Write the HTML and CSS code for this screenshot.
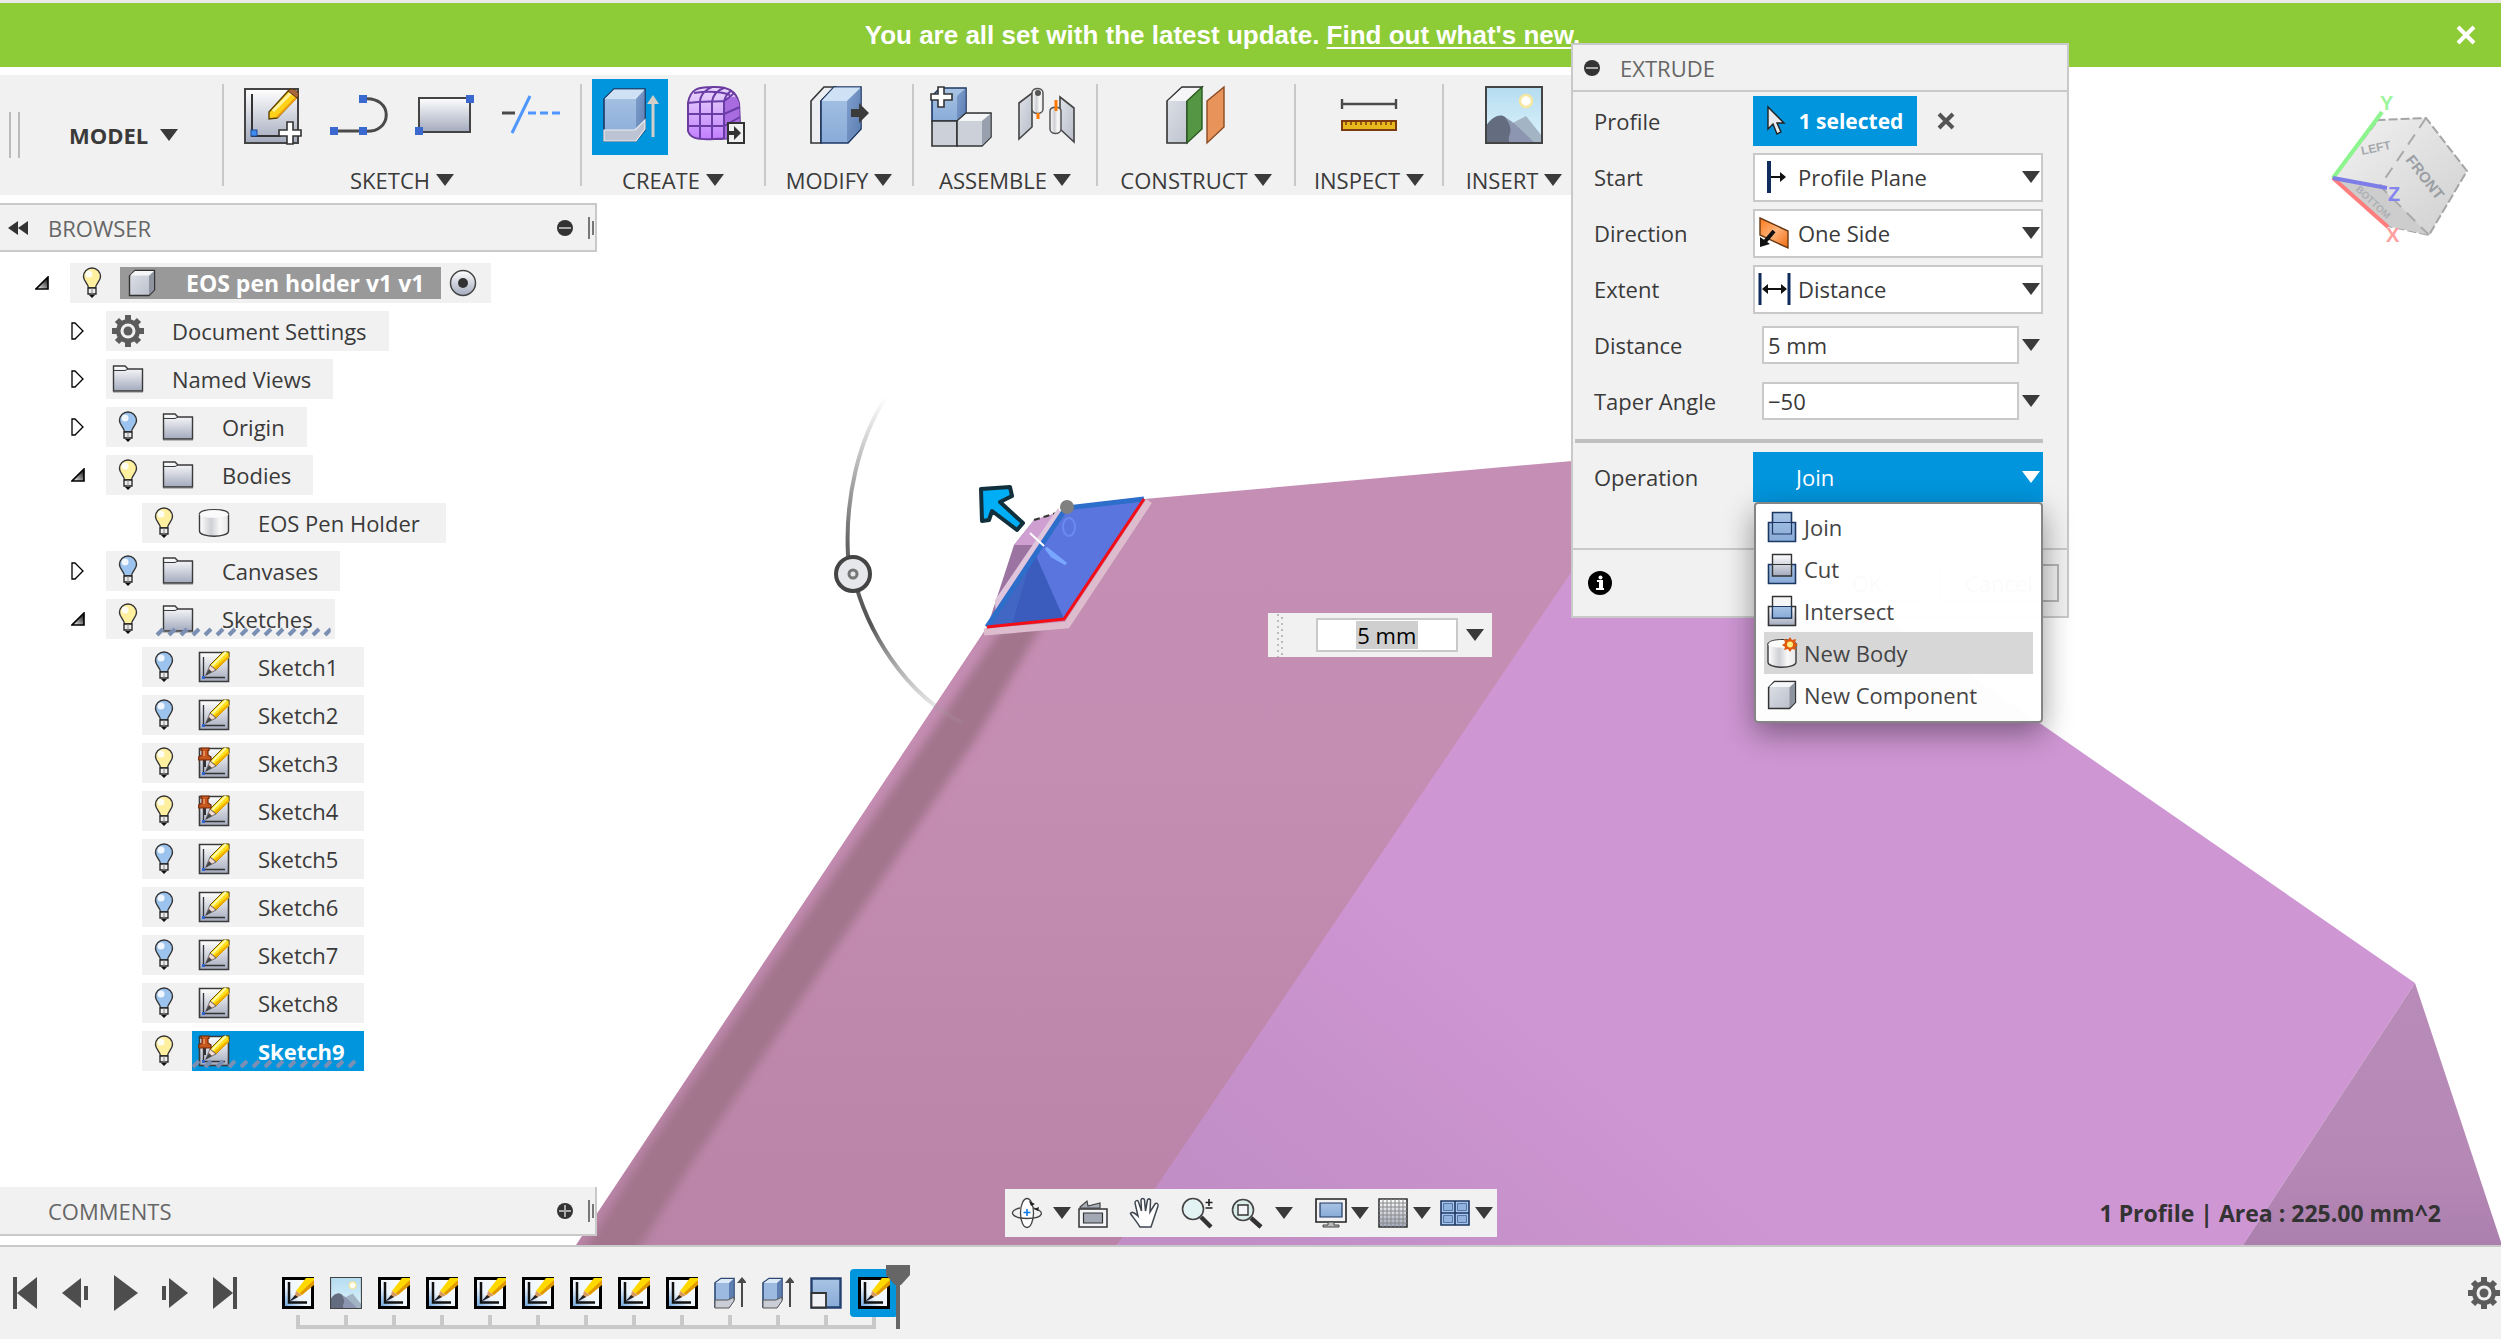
FILE: index.html
```html
<!DOCTYPE html>
<html lang="en">
<head>
<meta charset="utf-8">
<title>EOS pen holder v1</title>
<link rel="stylesheet" href="styles.css">
</head>
<body>
<svg class="defs" width="0" height="0" aria-hidden="true">
  <defs>
    <linearGradient id="steel" x1="0" y1="0" x2="0" y2="1"><stop offset="0" stop-color="#fff"/><stop offset="1" stop-color="#a3aabd"/></linearGradient>
    <linearGradient id="blue" x1="0" y1="0" x2="0" y2="1"><stop offset="0" stop-color="#a9c4e4"/><stop offset="1" stop-color="#88abd8"/></linearGradient>
    <linearGradient id="blueside" x1="0" y1="0" x2="1" y2="1"><stop offset="0" stop-color="#7f9fce"/><stop offset="1" stop-color="#5b7db0"/></linearGradient>
    <linearGradient id="grey" x1="0" y1="0" x2="1" y2="1"><stop offset="0" stop-color="#dfe2e8"/><stop offset="1" stop-color="#b7bcc9"/></linearGradient>
    <linearGradient id="can" x1="0" y1="0" x2="1" y2="0"><stop offset="0" stop-color="#fff"/><stop offset=".4" stop-color="#cfd0d4"/><stop offset=".7" stop-color="#f8f8f8"/><stop offset="1" stop-color="#e6e6e8"/></linearGradient>
    <linearGradient id="violet" x1="0" y1="0" x2="0" y2="1"><stop offset="0" stop-color="#e9d8fb"/><stop offset="1" stop-color="#c27fff"/></linearGradient>
    <linearGradient id="orange" x1="0" y1="0" x2="1" y2="1"><stop offset="0" stop-color="#ff7a1a"/><stop offset=".5" stop-color="#ffb27a"/><stop offset="1" stop-color="#f06a0c"/></linearGradient>
    <linearGradient id="sky" x1="0" y1="0" x2="0" y2="1"><stop offset="0" stop-color="#b5dcf0"/><stop offset="1" stop-color="#ddf3fc"/></linearGradient>
    <linearGradient id="twist" x1="0" y1="1" x2="1" y2="0"><stop offset="0" stop-color="#fff"/><stop offset=".4" stop-color="#999"/><stop offset="1" stop-color="#000"/></linearGradient>
    <linearGradient id="page" x1="0" y1="1" x2="1" y2="0"><stop offset="0" stop-color="#5a9be0"/><stop offset=".4" stop-color="#eef5fc"/><stop offset="1" stop-color="#fff"/></linearGradient>
    <pattern id="hatch" width="12" height="10" patternUnits="userSpaceOnUse"><path d="M3 8L9 2" stroke="#7a8fb3" stroke-width="4"/></pattern>

    <symbol id="tri" viewBox="0 0 18 12"><path d="M0 0H18L9 12Z" fill="currentColor"/></symbol>
    <symbol id="closed" viewBox="0 0 14 18"><path d="M1 1H4L12 9L4 17H1Z" fill="#fff" stroke="#000" stroke-width="1.3"/></symbol>
    <symbol id="open" viewBox="0 0 14 14"><path d="M13 1V13H1Z" fill="url(#twist)" stroke="#000" stroke-width="1.6"/></symbol>
    <symbol id="bulb" viewBox="0 0 20 32"><path d="M6.500 21C6 16 1.500 14.500 1.500 9.500A8.500 8.500 0 0 1 18.500 9.500C18.500 14.500 14 16 13.500 21Z" fill="currentColor" stroke="#333" stroke-width="1.4"/><circle cx="7" cy="7" r="3.500" fill="#fff" opacity=".85"/><path d="M6 21H14V27H6Z" fill="#ececec" stroke="#222" stroke-width="1.3"/><path d="M10 21V27" stroke="#888"/><path d="M7 28H13L10 31Z" fill="#111"/></symbol>
    <symbol id="folder" viewBox="0 0 32 30"><path d="M1.500 2H13L16 5H30.500V27H1.500Z" fill="url(#steel)" stroke="#3a3a3a" stroke-width="1.4"/><path d="M2 6.500H13L16 5" fill="none" stroke="#3a3a3a"/><path d="M1 28.500H31" stroke="#bbb"/></symbol>
    <symbol id="gear" viewBox="0 0 32 32"><path d="M16 0V32M0 16H32" stroke="#5c5c5c" stroke-width="6"/><path d="M5 5L27 27M27 5L5 27" stroke="#5c5c5c" stroke-width="6"/><circle cx="16" cy="16" r="12" fill="#5c5c5c"/><circle cx="16" cy="16" r="7.500" fill="#f1f1f1"/><circle cx="16" cy="16" r="4.500" fill="#5c5c5c"/></symbol>
    <symbol id="cube" viewBox="0 0 28 28"><path d="M1.500 7L7 1.500H26.500V21L21 26.500H1.500Z" fill="url(#grey)" stroke="#333" stroke-width="1.4"/><path d="M21 7L26 2V21L21 26Z" fill="#8d939f"/><path d="M2 6.500L7 2H26L21 6.500Z" fill="#f5f6f8"/></symbol>
    <symbol id="can-icon" viewBox="0 0 32 30"><path d="M1.500 6V23C1.500 30 30.500 30 30.500 23V6Z" fill="url(#can)" stroke="#3a3a3a" stroke-width="1.4"/><path d="M1.500 6C1.500 0 30.500 0 30.500 6C30.500 11 1.500 11 1.500 6Z" fill="#fbfbfb"/><path d="M1.500 6C1.500 0 30.500 0 30.500 6" fill="none" stroke="#3a3a3a" stroke-width="1.2"/></symbol>
    <symbol id="sketch" viewBox="0 0 32 32"><path d="M1.500 1.500H30.500V30.500H1.500Z" fill="url(#steel)" stroke="#3a3a3a" stroke-width="1.600"/><path d="M5.500 6V26.500H27" fill="none" stroke="#333" stroke-width="1.300"/><rect x="4" y="25" width="3" height="3" fill="#2f62cc"/><path d="M25 1H31V6L18 19L12 14Z" fill="#ffe11a" stroke="#665200" stroke-width="1"/><path d="M31 4V7L18 19L16 17Z" fill="#f0b000"/><path d="M28 1L14 15" stroke="#fff9b0" stroke-width="2"/><path d="M12 14L18 19L8 24Z" fill="#f6d9cf" stroke="#555" stroke-width=".8"/><path d="M11 18L14 21L7 25Z" fill="#444"/></symbol>
    <symbol id="pinned" viewBox="0 0 32 32"><use href="#sketch"/><path d="M7 12V20" stroke="#333" stroke-width="2"/><path d="M3 1H11V3.500H10V8L13 10V13H.7V10L4 8V3.500H3Z" fill="#c8571f" stroke="#702a08" stroke-width="1.200"/><path d="M6 4V9" stroke="#f0a070" stroke-width="1.500"/></symbol>
    <symbol id="t-sketch" viewBox="0 0 32 32"><path d="M1.500 1.500H30.500V30.500H1.500Z" fill="url(#page)" stroke="#000" stroke-width="3"/><path d="M7 5V25.500H25" fill="none" stroke="#111" stroke-width="2.500"/><path d="M24 1H32V6L20 18L14 14Z" fill="#ffd800"/><path d="M32 3V8L20 18L18 16Z" fill="#e09a00"/><path d="M14 14L20 18L12 22Z" fill="#d99a62"/><path d="M13 18L16 20L7 25Z" fill="#222"/></symbol>
    <symbol id="t-extrude" viewBox="0 0 32 32"><path d="M1 6L7 1.500H20V22L15 30H1Z" fill="#9cb9e0" stroke="#2c4a75" stroke-width="1.600"/><path d="M1.500 6L7 2H19.500L15 6Z" fill="#dbe8f5"/><path d="M15 6L19.500 2V22L15 28Z" fill="#5f7fb3"/><path d="M1 23H14L20 20V24L15 31H1Z" fill="#c9cdd6" stroke="#555"/><path d="M28 6V30" stroke="#4a4a4a" stroke-width="2"/><path d="M28 0L33 6H23Z" fill="#4a4a4a"/></symbol>
    <symbol id="t-scale" viewBox="0 0 32 32"><path d="M1.500 1.500H30.500V30.500H1.500Z" fill="url(#blue)" stroke="#24406e" stroke-width="2.400"/><path d="M1.500 16H16V30.500H1.500Z" fill="#f0f1f5" stroke="#333" stroke-width="1.800"/></symbol>
    <symbol id="photo" viewBox="0 0 58 58"><path d="M1 1H57V57H1Z" fill="url(#sky)"/><circle cx="41" cy="15" r="6" fill="#fff" stroke="#f5e7a0" stroke-width="2.500"/><path d="M22 40L41 30L57 50V57H22Z" fill="#a3b5c4"/><path d="M1 40C6 32 14 27 20 31L48 57H1Z" fill="#646c80"/><path d="M20 31C34 40 42 50 50 57H25C20 48 32 48 20 31Z" fill="#8d96b0"/><path d="M1 1H57V57H1Z" fill="none" stroke="#444" stroke-width="2"/></symbol>
    <symbol id="minus" viewBox="0 0 16 16"><circle cx="8" cy="8" r="8" fill="#333"/><path d="M2 8H14" stroke="#aaa" stroke-width="2"/></symbol>
    <symbol id="plus" viewBox="0 0 16 16"><circle cx="8" cy="8" r="8" fill="#333"/><path d="M2 8H14M8 2V14" stroke="#aaa" stroke-width="2"/></symbol>
    <symbol id="grip" viewBox="0 0 8 24"><path d="M2 1V23M6 5V19" stroke="#777" stroke-width="2"/></symbol>
  </defs>
</svg>

<header class="banner" role="status">
  <p>You are all set with the latest update. <a href="#new">Find out what's new</a>.</p>
  <button class="banner-close" aria-label="Dismiss"><svg width="20" height="20" viewBox="0 0 20 20"><path d="M2 2L18 18M18 2L2 18" stroke="#fff" stroke-width="4"/></svg></button>
</header>

<main class="workspace">
  <svg class="scene" viewBox="0 67 2501 1178" preserveAspectRatio="xMidYMid slice" aria-hidden="true">
    <defs>
      <linearGradient id="pink" x1="0" y1="0" x2="0" y2="1"><stop offset="0" stop-color="#c58eb4"/><stop offset=".4" stop-color="#c48db2"/><stop offset="1" stop-color="#b984a7"/></linearGradient>
      <linearGradient id="purple" gradientUnits="userSpaceOnUse" x1="1230" y1="1260" x2="1480" y2="960"><stop offset="0" stop-color="#c08dc5"/><stop offset="1" stop-color="#ce96d3"/></linearGradient>
      <linearGradient id="dusk" x1="0" y1="0" x2="0" y2="1"><stop offset="0" stop-color="#b98bb9"/><stop offset=".7" stop-color="#b688b6"/><stop offset="1" stop-color="#ab7fae"/></linearGradient>
      <linearGradient id="arc" x1="0" y1="0" x2="0" y2="1"><stop offset="0" stop-color="#666" stop-opacity="0"/><stop offset=".45" stop-color="#666"/><stop offset=".7" stop-color="#555"/><stop offset="1" stop-color="#aaa" stop-opacity=".1"/></linearGradient>
      <linearGradient id="face" x1="0" y1="0" x2="1" y2="1"><stop offset="0" stop-color="#f2f2f2"/><stop offset="1" stop-color="#cfcfcf"/></linearGradient>
      <filter id="soft" x="-20%" y="-5%" width="140%" height="110%"><feGaussianBlur stdDeviation="5"/></filter>
      <clipPath id="body"><path d="M576 1245L987 627L1144 499L1640 457V1245Z"/></clipPath>
    </defs>
    <path d="M576 1245L987 627L1064 619L1144 499L1651 454L1700 600L1117 1245Z" fill="url(#pink)"/>
    <g clip-path="url(#body)"><path d="M1000 630L1046 618L978 736L694 1160L632 1260H578L646 1150L926 740Z" fill="#a2758c" filter="url(#soft)"/></g>
    <path d="M1651 454L2415 983L2243 1245H1117Z" fill="url(#purple)"/>
    <path d="M2415 983L2243 1245H2502Z" fill="url(#dusk)"/>

    <path d="M987 628L1014 545L1034 520L1063 511L1064 600Z" fill="#9b74a1"/>
    <path d="M1014 545L1034 520L1063 511L1040 545Z" fill="#cf9fd2"/>
    <path d="M1034 520L1063 511" stroke="#333" stroke-width="2" stroke-dasharray="6 4"/>
    <path d="M995 600L1058 508L1062 514L996 622Z" fill="#e0c6dc"/>
    <path d="M984 632L1067 625L1149 501" fill="none" stroke="#dcbccd" stroke-width="7"/>
    <path d="M987 627L1066 508L1144 499L1064 619Z" fill="#5b75df"/>
    <path d="M987 627L1036 556L1064 619Z" fill="#3c5cbd"/>
    <path d="M1036 556L1030 562L1012 625L987 627Z" fill="#4266c4"/>
    <path d="M987 627L1066 508L1144 499" fill="none" stroke="#2e6ecb" stroke-width="5"/>
    <path d="M987 627L1064 619L1144 499" fill="none" stroke="#f30d17" stroke-width="3"/>
    <circle cx="1067" cy="507" r="7" fill="#808080"/>
    <path d="M1046 548L1066 564L1052 556Z" fill="#79a7ff" stroke="#79a7ff" stroke-width="3"/>
    <path d="M1030 533L1044 546" stroke="#fff" stroke-width="2"/>
    <ellipse cx="1069" cy="527" rx="6" ry="9" fill="none" stroke="#7ba0ff" stroke-width="2" opacity=".5"/>
    <path d="M886 397C858 440 845 500 848 555L853 574C866 630 905 695 963 723" fill="none" stroke="url(#arc)" stroke-width="4"/>
    <circle cx="853" cy="574" r="17" fill="#e6e7ea" stroke="#444" stroke-width="4"/>
    <circle cx="853" cy="574" r="4" fill="none" stroke="#777" stroke-width="3"/>
    <path d="M981 489L1010 487L1012 496L1000 502L1023 523L1017 530L992 511L989 520L982 521Z" fill="#00aef6" stroke="#12303c" stroke-width="4" stroke-linejoin="round"/>

    <g class="viewcube">
      <path d="M2333 178L2378 120L2426 118L2467 171L2429 235L2388 226Z" fill="url(#face)" stroke="#a5a5a5" stroke-width="2" stroke-dasharray="9 3"/>
      <path d="M2333 178L2380 186L2429 235L2388 226Z" fill="#cdcdcd"/>
      <path d="M2426 118L2380 186L2429 235" fill="none" stroke="#aaa" stroke-width="2" stroke-dasharray="12 8"/>
      <path d="M2333 178L2382 112" stroke="#8df58d" stroke-width="4"/>
      <path d="M2333 178L2388 227" stroke="#ff7d7d" stroke-width="4"/>
      <path d="M2333 178L2387 188" stroke="#7d7de8" stroke-width="4"/>
      <text x="2380" y="110" fill="#9df59d">Y</text>
      <text x="2386" y="242" fill="#ffa0a0">X</text>
      <text x="2388" y="201" fill="#8484ee">Z</text>
      <text transform="translate(2405 160) rotate(52)" fill="#9b9fa4" class="cube-face">FRONT</text>
      <text transform="translate(2362 155) rotate(-12)" fill="#a5a8ac" class="cube-side">LEFT</text>
      <text transform="translate(2355 190) rotate(43)" fill="#adb0b4" class="cube-low">BOTTOM</text>
    </g>
  </svg>

  <nav class="toolbar" aria-label="Tools">
    <svg class="toolbar-grip" width="14" height="48" viewBox="0 0 14 48"><path d="M2 1V47M11 1V47" stroke="#bbb" stroke-width="2"/></svg>
    <button class="mode">MODEL <svg width="18" height="12"><use href="#tri"/></svg></button>

    <section class="group sketch-group">
      <div class="tools">
        <button class="tool" aria-label="Create sketch"><svg viewBox="0 0 76 76"><path d="M10 10H63V64H10Z" fill="url(#steel)" stroke="#444" stroke-width="2"/><path d="M17 15V57H46" fill="none" stroke="#333" stroke-width="2"/><rect x="16" y="51" width="6" height="6" fill="#3e8ef0" stroke="#1a4a9a"/><path d="M34 33L54 11L63 17L42 39L34 40Z" fill="#ffd21a" stroke="#5c4200" stroke-width="1.400"/><path d="M38 32L56 14" stroke="#fff3a0" stroke-width="3"/><path d="M42 38L61 19" stroke="#f0a010" stroke-width="2"/><path d="M53 12C57 7 67 13 62 19Z" fill="#a9683c" stroke="#5c3212"/><path d="M52 43H58V51H66V57H58V65H52V57H44V51H52Z" fill="#fff" stroke="#333" stroke-width="1.600"/></svg></button>
        <button class="tool" aria-label="Line"><svg viewBox="0 0 76 76"><path d="M13 52H42M42 20C73 16 73 56 42 52" fill="none" stroke="#4a4a4a" stroke-width="3"/><path d="M9 48H17V56H9ZM38 48H46V56H38ZM38 16H46V24H38Z" fill="#3a68cf"/></svg></button>
        <button class="tool" aria-label="Rectangle"><svg viewBox="0 0 76 76"><path d="M12 19H63V53H12Z" fill="url(#steel)" stroke="#444" stroke-width="2"/><path d="M59 16H67V24H59ZM8 48H16V56H8Z" fill="#3a68cf"/></svg></button>
        <button class="tool" aria-label="Trim"><svg viewBox="0 0 76 76"><path d="M9 34H22" stroke="#4a4a4a" stroke-width="3"/><path d="M19 54L37 17" stroke="#4f97ff" stroke-width="3"/><path d="M35 34H67" stroke="#4f97ff" stroke-width="3" stroke-dasharray="8 4"/></svg></button>
      </div>
      <button class="label">SKETCH <svg width="18" height="12"><use href="#tri"/></svg></button>
    </section>

    <section class="group create-group">
      <div class="tools">
        <button class="tool active" aria-label="Extrude"><svg viewBox="0 0 76 76"><path d="M12 20L22 10H53V51L44 62H12Z" fill="url(#blue)" stroke="#1d3763" stroke-width="1.600"/><path d="M12.500 20L22 10.500H52.500L44 20Z" fill="#cfe2f5"/><path d="M44 20L52.500 11V50L44 61Z" fill="url(#blueside)"/><path d="M12 51H43L53 41V50L44 62H12Z" fill="#bcc3d3" stroke="#eee" stroke-width="1.200"/><path d="M61 20V58" stroke="#d3cfc8" stroke-width="3"/><path d="M61 16L67 25H55Z" fill="#d3cfc8"/></svg></button>
        <button class="tool" aria-label="Create form"><svg viewBox="0 0 76 76"><path d="M10 24C12 10 20 8 34 8C50 7 58 12 61 24L62 46C61 58 56 60 36 60C16 61 12 58 10 52Z" fill="url(#violet)" stroke="#6a3c9e" stroke-width="2"/><path d="M46 22C56 16 58 16 61 24L62 46C60 56 54 58 46 60Z" fill="#a86be0"/><path d="M10 24C25 22 35 23 46 22C52 18 56 15 56 13M10 35H46L62 28M10 47H46L62 38M22 60V23C22 16 28 10 34 8M34 60V23C35 16 40 11 46 9M46 60V22C48 15 52 12 54 12M16 14C30 12 44 13 52 16" fill="none" stroke="#6a3ca6" stroke-width="2"/><path d="M50 44H66V64H50Z" fill="#f1f1f1" stroke="#333" stroke-width="2"/><path d="M50 52H56V47L63 54L56 61V56H50Z" fill="#333"/></svg></button>
      </div>
      <button class="label">CREATE <svg width="18" height="12"><use href="#tri"/></svg></button>
    </section>

    <section class="group modify-group">
      <div class="tools">
        <button class="tool" aria-label="Press pull"><svg viewBox="0 0 76 76"><path d="M10 22L23 8H34L20 22V64H10Z" fill="#eceef2" stroke="#333" stroke-width="1.600"/><path d="M20 22L33 8H60V50L47 64H20Z" fill="url(#blue)" stroke="#1d3763" stroke-width="1.600"/><path d="M20.500 22L33 8.500H59.500L46 22Z" fill="#cfe2f5"/><path d="M46 22L59.500 9V49L46 63Z" fill="url(#blueside)"/><path d="M50 30H58V24L68 34L58 44V38H50Z" fill="#3b3b3b"/></svg></button>
      </div>
      <button class="label">MODIFY <svg width="18" height="12"><use href="#tri"/></svg></button>
    </section>

    <section class="group assemble-group">
      <div class="tools">
        <button class="tool" aria-label="New component"><svg viewBox="0 0 76 76"><path d="M8 17L16 9H42V34L33 42H8Z" fill="url(#blue)" stroke="#1d3763" stroke-width="1.600"/><path d="M33 17L41.500 9.500V34L33 42Z" fill="url(#blueside)"/><path d="M8 42H33V67H8Z" fill="#ccd0d8" stroke="#333" stroke-width="1.600"/><path d="M33 42L42 34H67V58L58 67H33Z" fill="#ccd0d8" stroke="#333" stroke-width="1.600"/><path d="M34 42L42 35H66L58 42Z" fill="#f4f5f7"/><path d="M58 42L66.500 35V58L58 66.500Z" fill="#98a0ae"/><path d="M14 8H20V15H28V21H20V28H14V21H7V15H14Z" fill="#fff" stroke="#333" stroke-width="1.600"/></svg></button>
        <button class="tool" aria-label="Joint"><svg viewBox="0 0 76 76"><path d="M9 24L22 14V48L9 60Z" fill="url(#grey)" stroke="#444" stroke-width="1.600"/><path d="M22 14C22 8 33 8 33 14V30C33 36 22 36 22 30Z" fill="url(#can)" stroke="#555" stroke-width="1.500"/><circle cx="28" cy="14" r="3" fill="#555"/><path d="M50 18L64 29V63L50 50Z" fill="url(#grey)" stroke="#444" stroke-width="1.600"/><path d="M40 32C40 27 51 27 51 32V50C51 56 40 56 40 50Z" fill="url(#can)" stroke="#555" stroke-width="1.500"/><path d="M28 34V40M46 21V32" stroke="#ff7800" stroke-width="3"/></svg></button>
      </div>
      <button class="label">ASSEMBLE <svg width="18" height="12"><use href="#tri"/></svg></button>
    </section>

    <section class="group construct-group">
      <div class="tools">
        <button class="tool" aria-label="Offset plane"><svg viewBox="0 0 76 76"><path d="M9 22L24 8H44L29 22V64H9Z" fill="url(#grey)" stroke="#333" stroke-width="1.600"/><path d="M10 22L24 9H43L29 22Z" fill="#f6f6f8"/><path d="M29 22L44 8V50L29 64Z" fill="#549643" stroke="#2a5a20" stroke-width="1.400"/><path d="M49 22L66 8V48L49 64Z" fill="#e8935a" stroke="#8a4a20" stroke-width="1.400"/></svg></button>
      </div>
      <button class="label">CONSTRUCT <svg width="18" height="12"><use href="#tri"/></svg></button>
    </section>

    <section class="group inspect-group">
      <div class="tools">
        <button class="tool" aria-label="Measure"><svg viewBox="0 0 76 76"><path d="M11 20V30M65 20V30M11 25H65" fill="none" stroke="#4a4a4a" stroke-width="2.400"/><path d="M11 42H65V51H11Z" fill="#e8b91c" stroke="#7a3c10" stroke-width="2"/><path d="M15 42V46M20 42V46M25 42V46M30 42V46M35 42V46M40 42V46M45 42V46M50 42V46M55 42V46M60 42V46" stroke="#7a3c10" stroke-width="1.500"/></svg></button>
      </div>
      <button class="label">INSPECT <svg width="18" height="12"><use href="#tri"/></svg></button>
    </section>

    <section class="group insert-group">
      <div class="tools">
        <button class="tool" aria-label="Attached canvas"><svg class="photo" viewBox="0 0 76 76"><use href="#photo" x="9" y="7" width="58" height="58"/></svg></button>
      </div>
      <button class="label">INSERT <svg width="18" height="12"><use href="#tri"/></svg></button>
    </section>
  </nav>

  <aside class="side">
    <header class="panel-head">
      <svg class="collapse" width="20" height="14" viewBox="0 0 20 14"><path d="M10 0V14L0 7ZM20 0V14L10 7Z" fill="#333"/></svg>
      <h2>BROWSER</h2>
      <button class="dot" aria-label="Minimise"><svg width="16" height="16"><use href="#minus"/></svg></button>
      <svg width="8" height="24"><use href="#grip"/></svg>
    </header>

    <ul class="tree">
      <li class="root"><span class="twist"><svg width="14" height="14"><use href="#open"/></svg></span><span class="row"><span class="cell on"><svg width="20" height="32"><use href="#bulb"/></svg></span><span class="current"><span class="cell"><svg width="28" height="28"><use href="#cube"/></svg></span><b>EOS pen holder v1 v1</b></span><span class="cell"><svg width="28" height="28" viewBox="0 0 28 28"><circle cx="14" cy="14" r="12.500" fill="url(#steel)" stroke="#444" stroke-width="1.500"/><circle cx="14" cy="14" r="5" fill="#333"/></svg></span></span></li>
      <li><span class="twist"><svg width="14" height="18"><use href="#closed"/></svg></span><span class="row"><span class="cell"><svg width="32" height="32"><use href="#gear"/></svg></span><span class="name">Document Settings</span></span></li>
      <li><span class="twist"><svg width="14" height="18"><use href="#closed"/></svg></span><span class="row"><span class="cell"><svg width="32" height="30"><use href="#folder"/></svg></span><span class="name">Named Views</span></span></li>
      <li><span class="twist"><svg width="14" height="18"><use href="#closed"/></svg></span><span class="row"><span class="cell off"><svg width="20" height="32"><use href="#bulb"/></svg></span><span class="cell"><svg width="32" height="30"><use href="#folder"/></svg></span><span class="name">Origin</span></span></li>
      <li><span class="twist"><svg width="14" height="14"><use href="#open"/></svg></span><span class="row"><span class="cell on"><svg width="20" height="32"><use href="#bulb"/></svg></span><span class="cell"><svg width="32" height="30"><use href="#folder"/></svg></span><span class="name">Bodies</span></span></li>
      <li class="leaf"><span class="row"><span class="cell on"><svg width="20" height="32"><use href="#bulb"/></svg></span><span class="cell"><svg width="32" height="30"><use href="#can-icon"/></svg></span><span class="name">EOS Pen Holder</span></span></li>
      <li><span class="twist"><svg width="14" height="18"><use href="#closed"/></svg></span><span class="row"><span class="cell off"><svg width="20" height="32"><use href="#bulb"/></svg></span><span class="cell"><svg width="32" height="30"><use href="#folder"/></svg></span><span class="name">Canvases</span></span></li>
      <li><span class="twist"><svg width="14" height="14"><use href="#open"/></svg></span><span class="row"><span class="cell on"><svg width="20" height="32"><use href="#bulb"/></svg></span><span class="cell"><svg width="32" height="30"><use href="#folder"/></svg></span><span class="name">Sketches</span><svg class="hatch" height="10"><rect width="100%" height="10" fill="url(#hatch)"/></svg></span></li>
      <li class="leaf"><span class="row"><span class="cell off"><svg width="20" height="32"><use href="#bulb"/></svg></span><span class="cell"><svg width="32" height="32"><use href="#sketch"/></svg></span><span class="name">Sketch1</span></span></li>
      <li class="leaf"><span class="row"><span class="cell off"><svg width="20" height="32"><use href="#bulb"/></svg></span><span class="cell"><svg width="32" height="32"><use href="#sketch"/></svg></span><span class="name">Sketch2</span></span></li>
      <li class="leaf"><span class="row"><span class="cell on"><svg width="20" height="32"><use href="#bulb"/></svg></span><span class="cell"><svg width="32" height="32"><use href="#pinned"/></svg></span><span class="name">Sketch3</span></span></li>
      <li class="leaf"><span class="row"><span class="cell on"><svg width="20" height="32"><use href="#bulb"/></svg></span><span class="cell"><svg width="32" height="32"><use href="#pinned"/></svg></span><span class="name">Sketch4</span></span></li>
      <li class="leaf"><span class="row"><span class="cell off"><svg width="20" height="32"><use href="#bulb"/></svg></span><span class="cell"><svg width="32" height="32"><use href="#sketch"/></svg></span><span class="name">Sketch5</span></span></li>
      <li class="leaf"><span class="row"><span class="cell off"><svg width="20" height="32"><use href="#bulb"/></svg></span><span class="cell"><svg width="32" height="32"><use href="#sketch"/></svg></span><span class="name">Sketch6</span></span></li>
      <li class="leaf"><span class="row"><span class="cell off"><svg width="20" height="32"><use href="#bulb"/></svg></span><span class="cell"><svg width="32" height="32"><use href="#sketch"/></svg></span><span class="name">Sketch7</span></span></li>
      <li class="leaf"><span class="row"><span class="cell off"><svg width="20" height="32"><use href="#bulb"/></svg></span><span class="cell"><svg width="32" height="32"><use href="#sketch"/></svg></span><span class="name">Sketch8</span></span></li>
      <li class="leaf selected"><span class="row"><span class="cell on"><svg width="20" height="32"><use href="#bulb"/></svg></span><span class="cell"><svg width="32" height="32"><use href="#pinned"/></svg></span><b class="name">Sketch9</b><svg class="hatch" height="10"><rect width="100%" height="10" fill="url(#hatch)"/></svg></span></li>
    </ul>

    <header class="panel-head comments">
      <h2>COMMENTS</h2>
      <button class="dot" aria-label="Expand"><svg width="16" height="16"><use href="#plus"/></svg></button>
      <svg width="8" height="24"><use href="#grip"/></svg>
    </header>
  </aside>

  <form class="value-box">
    <svg width="8" height="44" viewBox="0 0 8 44"><path d="M2 1V44" stroke="#bbb" stroke-width="2" stroke-dasharray="2 4"/><path d="M6 4V44" stroke="#bbb" stroke-width="2" stroke-dasharray="2 4"/></svg>
    <label class="value-field"><input aria-label="Distance value" value="5 mm"></label>
    <button type="button" class="drop" aria-label="More"><svg width="18" height="12"><use href="#tri"/></svg></button>
  </form>

  <form class="dialog" aria-label="Extrude">
    <header class="dialog-head"><svg width="16" height="16"><use href="#minus"/></svg><h2>EXTRUDE</h2></header>
    <div class="dialog-body">
      <div class="prop"><span class="prop-name">Profile</span>
        <button type="button" class="pick"><svg width="18" height="30" viewBox="0 0 18 30"><path d="M1 1V23L6 18L10 28L14 26L10 17H17Z" fill="#e8eaee" stroke="#222" stroke-width="1.400"/></svg>1 selected</button>
        <button type="button" class="clear" aria-label="Clear"><svg width="18" height="18" viewBox="0 0 18 18"><path d="M2 2L16 16M16 2L2 16" stroke="#555" stroke-width="4"/></svg></button>
      </div>
      <div class="prop"><label class="prop-name" for="start">Start</label>
        <div class="field"><svg width="36" height="32" viewBox="0 0 36 32"><path d="M11 0V32" stroke="#0f2c5c" stroke-width="4"/><path d="M13 16H24" stroke="#111" stroke-width="2"/><path d="M22 11L28 16L22 21Z" fill="#111"/></svg><select id="start"><option>Profile Plane</option></select><svg class="arrow" width="18" height="12"><use href="#tri"/></svg></div>
      </div>
      <div class="prop"><label class="prop-name" for="direction">Direction</label>
        <div class="field"><svg width="36" height="32" viewBox="0 0 36 32"><path d="M2 1L30 14V31L2 18Z" fill="url(#orange)" stroke="#6b3a12" stroke-width="1.400"/><path d="M16 14L5 27" stroke="#111" stroke-width="4"/><path d="M2 30V20L12 27Z" fill="#111"/></svg><select id="direction"><option>One Side</option></select><svg class="arrow" width="18" height="12"><use href="#tri"/></svg></div>
      </div>
      <div class="prop"><label class="prop-name" for="extent">Extent</label>
        <div class="field"><svg width="36" height="32" viewBox="0 0 36 32"><path d="M2 0V32M31 0V32" stroke="#0f2c5c" stroke-width="3"/><path d="M6 16H28" stroke="#111" stroke-width="2"/><path d="M10 11L4 16L10 21ZM23 11L29 16L23 21Z" fill="#111"/></svg><select id="extent"><option>Distance</option></select><svg class="arrow" width="18" height="12"><use href="#tri"/></svg></div>
      </div>
      <div class="prop"><label class="prop-name" for="distance">Distance</label>
        <input class="num" id="distance" value="5 mm"><button type="button" class="drop" aria-label="Distance options"><svg width="18" height="12"><use href="#tri"/></svg></button>
      </div>
      <div class="prop"><label class="prop-name" for="taper">Taper Angle</label>
        <input class="num" id="taper" value="−50"><button type="button" class="drop" aria-label="Taper options"><svg width="18" height="12"><use href="#tri"/></svg></button>
      </div>
      <hr>
      <div class="prop"><label class="prop-name" for="operation">Operation</label>
        <div class="field open"><select id="operation"><option>Join</option></select><svg class="arrow" width="18" height="12"><use href="#tri"/></svg>
          <ul class="menu" role="listbox" aria-label="Operation">
            <li role="option"><svg width="30" height="32" viewBox="0 0 30 32"><path d="M5.500 1.500H24.500V11.500H28.500V30.500H1.500V11.500H5.500Z" fill="url(#blue)" stroke="#1d3763" stroke-width="1.600"/><path d="M5.500 11.500H24.500V23H5.500Z" fill="none" stroke="#1d3763" stroke-width="1.200"/></svg>Join</li>
            <li role="option"><svg width="30" height="32" viewBox="0 0 30 32"><path d="M1.500 11.500H28.500V30.500H1.500Z" fill="url(#blue)" stroke="#1d3763" stroke-width="1.600"/><path d="M5.500 1.500H24.500V23H5.500Z" fill="url(#steel)" stroke="#333" stroke-width="1.400"/><path d="M5.500 11.500H24.500" stroke="#333"/></svg>Cut</li>
            <li role="option"><svg width="30" height="32" viewBox="0 0 30 32"><path d="M1.500 11.500H28.500V30.500H1.500Z" fill="url(#steel)" stroke="#333" stroke-width="1.600"/><path d="M5.500 1.500H24.500V23H5.500Z" fill="#f6f6f8" stroke="#333" stroke-width="1.400"/><path d="M5.500 11.500H24.500V23H5.500Z" fill="url(#blue)" stroke="#1d3763" stroke-width="1.200"/></svg>Intersect</li>
            <li role="option" aria-selected="true"><svg width="30" height="32" viewBox="0 0 30 32"><path d="M1 7V25C1 32 29 32 29 25V7Z" fill="url(#can)" stroke="#3a3a3a" stroke-width="1.400"/><path d="M1 7C1 1 29 1 29 7C29 12 1 12 1 7Z" fill="#fbfbfb"/><path d="M1 7C1 1 29 1 29 7" fill="none" stroke="#3a3a3a"/><path d="M23 0L25 3L29 2L28 6L31 8L28 10L29 13L25 12L23 15L21 12L17 13L18 10L15 8L18 6L17 2L21 3Z" fill="#e05a10"/><circle cx="23" cy="7.500" r="3" fill="#ffee80"/></svg>New Body</li>
            <li role="option"><svg width="30" height="30"><use href="#cube"/></svg>New Component</li>
          </ul>
        </div>
      </div>
    </div>
    <footer class="dialog-foot">
      <svg width="24" height="24" viewBox="0 0 24 24"><circle cx="12" cy="12" r="12" fill="#000"/><path d="M9 10H14V18H16M8 18H16" fill="none" stroke="#fff" stroke-width="2"/><path d="M12.500 10V18" stroke="#fff" stroke-width="3"/><circle cx="12.500" cy="6.500" r="2" fill="#fff"/></svg>
      <button type="button" class="act">OK</button><button type="button" class="act">Cancel</button>
    </footer>
  </form>

  <div class="navbar-wrap">
    <nav class="navbar" aria-label="View">
      <button class="nav-orbit" aria-label="Orbit"><svg width="32" height="32" viewBox="0 0 32 32"><ellipse cx="16" cy="16" rx="6.500" ry="14.500" fill="#fff" stroke="#444" stroke-width="1.300"/><path d="M22 11C34 14 34 21 16 21.500C-2 21 -2 13 9 11" fill="none" stroke="#444" stroke-width="1.300"/><path d="M18 4L24 7L20 9ZM23 12L28 10L27 14Z" fill="#222"/><path d="M16 12V19M12.500 15.500H19.500" stroke="#0a7aea" stroke-width="1.600"/></svg></button>
      <button class="nav-arrow" aria-label="Orbit options"><svg width="18" height="12"><use href="#tri"/></svg></button>
      <button class="nav-look" aria-label="Look at"><svg width="30" height="30" viewBox="0 0 30 30"><path d="M2 9L9 3L10 8L22 5V10H2Z" fill="#aab0ba" stroke="#444" stroke-width="1.200"/><path d="M1 11H29V29H1Z" fill="#f4f5f8" stroke="#333" stroke-width="1.500"/><path d="M5.500 15H24.500V25H5.500Z" fill="#a2a8b4" stroke="#333" stroke-width="1.200"/></svg></button>
      <button class="nav-tool" aria-label="Pan"><svg width="32" height="32" viewBox="0 0 32 32"><path d="M11 30C8 25 3 19 1.500 16.500C3 14 6 16 9 19L6 6C6 3 9 3 9.500 5L12.500 14L12 3C12.500 1 15 1 15.500 3L16.500 14L18.500 3C19.500 1 22 2 21.500 4L21 15L26 7C27.500 5 29.500 7 29 9L25 21L22 30Z" fill="#fff" stroke="#3f4650" stroke-width="1.500"/></svg></button>
      <button class="nav-tool" aria-label="Zoom"><svg width="32" height="32" viewBox="0 0 32 32"><circle cx="12" cy="12" r="10.500" fill="#e3f2f2" stroke="#444" stroke-width="1.600"/><path d="M20 20L30 30" stroke="#333" stroke-width="4.500"/><path d="M28 2V9M24.500 5.500H31.500M24.500 11H31.500" stroke="#222" stroke-width="1.600"/></svg></button>
      <button class="nav-fit" aria-label="Fit"><svg width="32" height="32" viewBox="0 0 32 32"><circle cx="12" cy="13" r="10.500" fill="#d9ecea" stroke="#444" stroke-width="1.600"/><path d="M7 8H17V18H7Z" fill="#f3f4f7" stroke="#333" stroke-width="1.400"/><path d="M20 21L30 30" stroke="#333" stroke-width="4.500"/></svg></button>
      <button class="nav-arrow" aria-label="Zoom options"><svg width="18" height="12"><use href="#tri"/></svg></button>
      <button class="nav-set first" aria-label="Display settings"><svg width="32" height="32" viewBox="0 0 32 32"><path d="M1 2H31V25H1Z" fill="#f2f2f4" stroke="#222" stroke-width="1.600"/><path d="M5 6H27V20H5Z" fill="url(#blue)" stroke="#1d3763" stroke-width="1.200"/><path d="M13 25H19V28H24V30H8V28H13Z" fill="#bbb" stroke="#444"/></svg><svg width="18" height="12"><use href="#tri"/></svg></button>
      <button class="nav-set" aria-label="Grid settings"><svg width="32" height="32" viewBox="0 0 32 32"><path d="M2 2H30V30H2Z" fill="url(#steel)" stroke="#333" stroke-width="1.600"/><path d="M6 2V30M10 2V30M14 2V30M18 2V30M22 2V30M26 2V30M2 6H30M2 10H30M2 14H30M2 18H30M2 22H30M2 26H30" stroke="#888" stroke-width="1"/></svg><svg width="18" height="12"><use href="#tri"/></svg></button>
      <button class="nav-set" aria-label="Viewports"><svg width="32" height="32" viewBox="0 0 32 32"><path d="M2 4H30V28H2ZM16 4V28M2 16H30" fill="#a9c4e8" stroke="#1d3763" stroke-width="1.600"/><path d="M4.500 6.500H13.500V13.500H4.500ZM18.500 6.500H27.500V13.500H18.500ZM4.500 18.500H13.500V25.500H4.500ZM18.500 18.500H27.500V25.500H18.500Z" fill="#92b2de" stroke="#5377ab"/></svg><svg width="18" height="12"><use href="#tri"/></svg></button>
    </nav>
  </div>
  <p class="status">1 Profile | Area : 225.00 mm^2</p>
</main>

<footer class="timeline">
  <div class="playback">
    <button aria-label="To start"><svg width="28" height="36" viewBox="0 0 28 36"><path d="M4 2V34" stroke="#4d4d4d" stroke-width="4"/><path d="M26 2V34L6 18Z" fill="#4d4d4d"/></svg></button>
    <button aria-label="Step back"><svg width="28" height="36" viewBox="0 0 28 36"><path d="M20 3V33L1 18Z" fill="#4d4d4d"/><path d="M25 11V25" stroke="#4d4d4d" stroke-width="4"/></svg></button>
    <button aria-label="Play"><svg width="28" height="36" viewBox="0 0 28 36"><path d="M3 0V36L27 18Z" fill="#4d4d4d"/></svg></button>
    <button aria-label="Step forward"><svg width="28" height="36" viewBox="0 0 28 36"><path d="M8 3V33L27 18Z" fill="#4d4d4d"/><path d="M3 11V25" stroke="#4d4d4d" stroke-width="4"/></svg></button>
    <button aria-label="To end"><svg width="28" height="36" viewBox="0 0 28 36"><path d="M2 2V34L22 18Z" fill="#4d4d4d"/><path d="M24 2V34" stroke="#4d4d4d" stroke-width="4"/></svg></button>
  </div>
  <ol class="history">
    <li><svg width="32" height="32"><use href="#t-sketch"/></svg></li>
    <li><svg width="32" height="32"><use href="#photo"/></svg></li>
    <li><svg width="32" height="32"><use href="#t-sketch"/></svg></li>
    <li><svg width="32" height="32"><use href="#t-sketch"/></svg></li>
    <li><svg width="32" height="32"><use href="#t-sketch"/></svg></li>
    <li><svg width="32" height="32"><use href="#t-sketch"/></svg></li>
    <li><svg width="32" height="32"><use href="#t-sketch"/></svg></li>
    <li><svg width="32" height="32"><use href="#t-sketch"/></svg></li>
    <li><svg width="32" height="32"><use href="#t-sketch"/></svg></li>
    <li><svg width="32" height="32"><use href="#t-extrude"/></svg></li>
    <li><svg width="32" height="32"><use href="#t-extrude"/></svg></li>
    <li><svg width="32" height="32"><use href="#t-scale"/></svg></li>
    <li class="now"><svg width="32" height="32"><use href="#t-sketch"/></svg><svg class="marker" width="26" height="64" viewBox="0 0 26 64"><path d="M1 0H25V10L16 20H10L1 10Z" fill="#666"/><path d="M13 10V64" stroke="#666" stroke-width="4"/></svg></li>
  </ol>
  <button class="settings" aria-label="Timeline settings"><svg width="32" height="32"><use href="#gear"/></svg></button>
</footer>
</body>
</html>
```

FILE: styles.css
```css
:root {
  --bar: #f1f1f1;
  --line: #c9c9c9;
  --ink: #3a3a3a;
  --blue: #0095dd;
}

* { box-sizing: border-box; }

body {
  margin: 0;
  min-height: 100vh;
  display: flex;
  flex-direction: column;
  overflow: hidden;
  background: #fff;
  color: var(--ink);
  font: 22px/32px "Open Sans", "Noto Sans", sans-serif;
}

button, input, select { font: inherit; color: inherit; }
button { padding: 0; border: 0; background: none; display: flex; align-items: center; justify-content: center; }
svg { flex: none; display: block; overflow: visible; }
h2, p, ul, ol { margin: 0; padding: 0; }
li { list-style: none; }
.defs { position: absolute; }

/* update banner */
.banner {
  height: 67px;
  border-top: 3px solid #e9e9e9;
  background: #8dcb37;
  color: #fff;
  display: grid;
  grid-template-columns: 70px 1fr 70px;
  align-items: center;
  font: bold 26px/32px "Liberation Sans", Arial, sans-serif;
}
.banner p { grid-column: 2; text-align: center; padding-right: 56px; }
.banner a { color: inherit; text-underline-offset: 3px; text-decoration-thickness: 2px; }

/* canvas */
.workspace {
  position: relative;
  flex: 1;
  display: flex;
  flex-direction: column;
  align-items: flex-start;
}
.scene { position: absolute; inset: 0; width: 100%; height: 100%; overflow: hidden; }
.viewcube text { font: bold 20px/24px "Liberation Sans", Arial, sans-serif; }
.viewcube .cube-face { font-size: 15px; }
.viewcube .cube-side { font-size: 12px; }
.viewcube .cube-low { font-size: 10px; }

/* toolbar */
.toolbar {
  position: relative;
  display: flex;
  align-items: center;
  height: 120px;
  margin-top: 8px;
  padding-left: 8px;
  background: var(--bar);
}
.mode { width: 200px; gap: 12px; font-weight: bold; height: 110px; justify-content: flex-start; padding-left: 47px; }
.group {
  position: relative;
  height: 102px;
  border-left: 2px solid var(--line);
  display: flex;
  flex-direction: column;
  align-items: center;
  justify-content: space-between;
}
.tools { display: flex; gap: 10px; margin-top: -5px; }
.tool { width: 76px; height: 76px; }
.tool svg { width: 76px; height: 76px; }
.tool.active { background: var(--blue); }
.label { gap: 6px; height: 22px; margin-bottom: -5px; line-height: 22px; white-space: nowrap; }
.sketch-group { width: 358px; }
.create-group { width: 184px; }
.modify-group { width: 148px; }
.assemble-group { width: 184px; }
.construct-group { width: 198px; }
.inspect-group { width: 148px; }
.insert-group { width: 142px; }

/* browser panel */
.side { position: relative; width: 597px; flex: 1; display: flex; flex-direction: column; padding: 8px 0 9px; }
.panel-head {
  display: flex;
  align-items: center;
  height: 49px;
  padding-left: 8px;
  background: var(--bar);
  border: solid var(--line);
  border-width: 2px 2px 2px 0;
}
.panel-head h2 { flex: 1; margin-left: 20px; }
h2 { font-size: 22px; font-weight: 400; color: #666; }
.dot { margin-right: 14px; }
.comments { margin-top: auto; padding-left: 28px; border-top-width: 0; }

.tree { padding-top: 11px; display: flex; flex-direction: column; gap: 8px; }
.tree li { display: flex; align-items: center; padding-left: 64px; }
.tree .root { padding-left: 28px; }
.tree .leaf { padding-left: 142px; }
.twist { width: 28px; margin-right: 14px; display: flex; justify-content: center; }
.row { position: relative; display: flex; align-items: center; height: 40px; padding-right: 22px; background: var(--bar); }
.root .row { padding-right: 6px; }
.cell { width: 44px; display: flex; justify-content: center; }
.cell + .cell, .current { margin-left: 6px; }
.name { margin-left: 22px; white-space: nowrap; }
.leaf .row { padding-right: 26px; }
.on { color: #fff0a0; }
.off { color: #9cc3ee; }
.current { display: flex; align-items: center; height: 32px; padding-right: 17px; background: #999; color: #fff; font-size: 23px; }
.current b { margin-left: 22px; white-space: nowrap; }
.hatch { position: absolute; left: 48px; right: 4px; bottom: 2px; width: calc(100% - 52px); overflow: hidden; }
.selected .row { background: linear-gradient(90deg, var(--bar) 50px, var(--blue) 50px); color: #fff; padding-right: 19px; }

/* on-canvas value box */
.value-box {
  position: absolute;
  left: 1268px;
  top: 546px;
  width: 224px;
  height: 44px;
  padding-left: 8px;
  display: flex;
  align-items: center;
  background: var(--bar);
}
.value-field { width: 148px; height: 34px; margin-left: 32px; border: 2px solid var(--line); background: #fff; display: flex; justify-content: center; align-items: center; }
.value-field input { width: 62px; height: 28px; padding: 0; border: 0; text-align: center; background: #cfcfcf; color: #000; }
.drop { width: 36px; height: 36px; }

/* extrude dialog */
.dialog { position: absolute; right: 432px; top: -24px; width: 498px; background: var(--bar); }
.dialog-head { display: flex; align-items: center; gap: 20px; height: 49px; padding-left: 11px; border: 2px solid var(--line); }
.dialog-body { border: solid var(--line); border-width: 0 2px; height: 456px; padding: 1px 24px 0 21px; }
.prop { display: flex; align-items: center; height: 56px; }
.prop-name { width: 159px; }
.pick { width: 164px; height: 50px; gap: 14px; background: var(--blue); color: #fff; font-weight: bold; white-space: nowrap; font-size: 21px; }
.clear { width: 58px; height: 50px; }
.field { position: relative; flex: 1; display: flex; align-items: center; height: 49px; padding-left: 3px; border: 2px solid var(--line); background: #fff; }
.field select { flex: 1; height: 100%; padding: 0 0 0 4px; border: 0; background: none; appearance: none; }
.field .arrow { margin-right: 1px; }
.field.open { height: 50px; background: var(--blue); border-color: var(--blue); color: #fff; }
.field.open select { padding-left: 38px; }
.num { flex: 1; min-width: 0; height: 38px; margin-left: 9px; padding: 0 4px; border: 2px solid var(--line); background: #fff; }
.dialog .drop { width: 24px; }
.dialog hr { height: 4px; margin: 10px 0 6px -19px; border: 0; background: #c0c0c0; }
.menu {
  position: absolute;
  z-index: 2;
  top: 48px;
  left: -1px;
  right: -2px;
  padding: 2px 8px;
  height: 221px;
  border: 2px solid #858585;
  border-radius: 4px;
  background: rgba(255, 255, 255, .98);
  box-shadow: 0 10px 30px rgba(0, 0, 0, .4);
  color: #444;
}
.menu li { display: flex; align-items: center; gap: 7px; height: 42px; padding-left: 3px; white-space: nowrap; }
.menu [aria-selected] { background: #d7d7d7; }
.dialog-foot { display: flex; align-items: center; gap: 12px; height: 70px; padding: 0 8px 0 15px; border: 2px solid var(--line); }
.dialog-foot svg { margin-right: auto; }
.act { width: 120px; height: 38px; border: 2px solid #b5b5b5; background: var(--bar); }

/* view navigation */
.navbar-wrap { position: absolute; left: 0; right: 0; bottom: 8px; display: flex; justify-content: center; pointer-events: none; }
.navbar { display: flex; align-items: center; height: 48px; background: var(--bar); }
.nav-orbit { width: 44px; }
.nav-arrow { width: 26px; }
.nav-look { width: 36px; margin-right: 8px; }
.nav-tool { width: 52px; }
.nav-fit { width: 48px; }
.nav-set { width: 62px; gap: 4px; }
.first { margin-left: 14px; }
.status { position: absolute; right: 60px; bottom: 16px; font-size: 23px; font-weight: bold; color: #333; }

/* timeline */
.timeline { display: flex; align-items: center; height: 94px; border-top: 2px solid var(--line); background: var(--bar); }
.timeline button { width: 50px; height: 40px; }
.playback { display: flex; }
.history { display: flex; flex: 1; height: 62px; margin: 14px 0 0 24px; }
.history li {
  position: relative;
  width: 48px;
  height: 60px;
  display: flex;
  justify-content: center;
  padding-top: 8px;
  background: linear-gradient(var(--line), var(--line)) 50% 46px / 4px 14px no-repeat, linear-gradient(var(--line), var(--line)) 0 56px / 48px 4px no-repeat;
}
.history li:first-child { background-position: 50% 46px, 24px 56px; }
.history li:last-child { background-size: 4px 14px, 26px 4px; }
.now::before { content: ""; position: absolute; inset: 0 0 12px; border-radius: 4px; background: var(--blue); }
.now svg { position: relative; }
.history .marker { position: absolute; right: -13px; top: -4px; }
.timeline .settings { width: 34px; }
```
